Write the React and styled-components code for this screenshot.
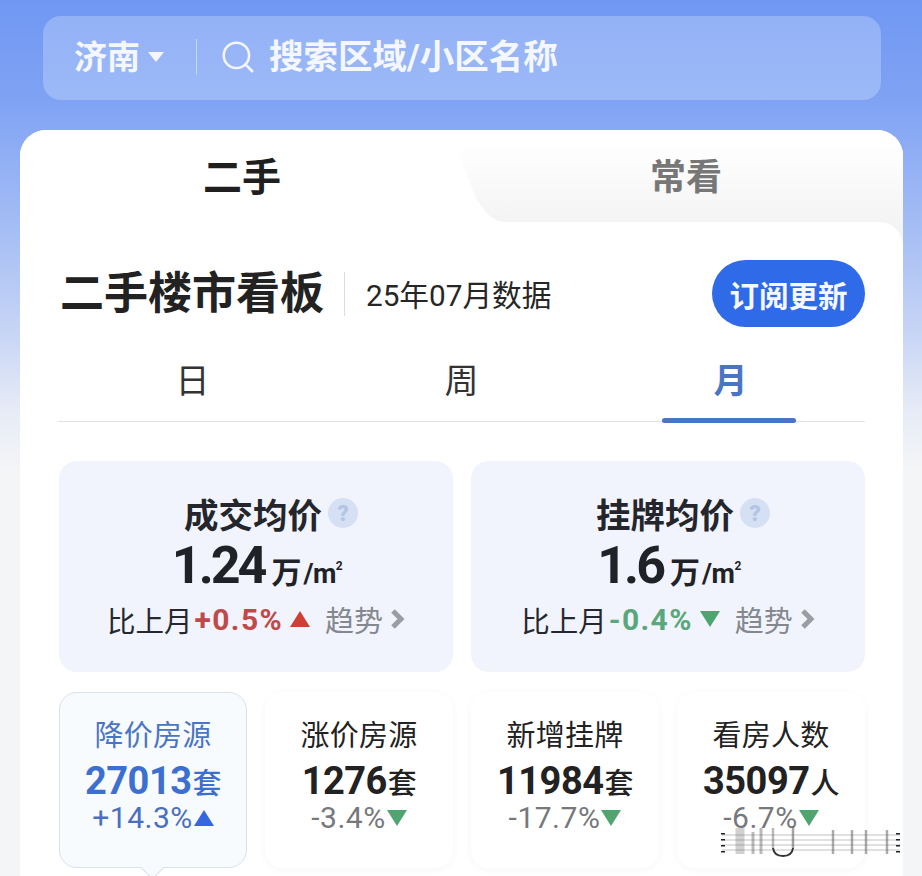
import styled, { createGlobalStyle } from 'styled-components'
import { Search } from 'lucide-react'

const GlobalStyle = createGlobalStyle`
  html, body {
    margin: 0;
    padding: 0;
    background: #f4f5f7;
  }
  * { box-sizing: border-box; }
`

const Page = styled.div`
  position: relative;
  width: 922px;
  height: 876px;
  overflow: hidden;
  padding: 16px 19px 0 20px;
  font-family: Roboto, "Noto Sans CJK SC", sans-serif;
  color: #222;
  background: linear-gradient(180deg, #7098f3 0, #7fa2f3 100px, #a3bcf5 220px, #c6d4f5 330px, #e6ebf6 410px, #f4f5f7 470px);
`

const SearchBar = styled.div`
  display: flex;
  align-items: center;
  height: 84px;
  margin: 0 22px 30px 23px;
  padding: 0 0 3px 31px;
  border-radius: 18px;
  background: linear-gradient(180deg, #93b1f6, #9cb9f7);
  color: #f4f7ff;
  font-size: 33px;
  font-weight: 700;
`

const City = styled.span`
  width: 74px;
  padding-bottom: 3px;
`

const Caret = styled.i`
  width: 0;
  height: 0;
  margin-right: 32px;
  border-left: 8px solid transparent;
  border-right: 8px solid transparent;
  border-top: 10px solid #f4f7ff;
`

const BarDivider = styled.i`
  width: 1px;
  height: 36px;
  margin-right: 24px;
  background: #c4d5fa;
`

const SearchIcon = styled(Search)`
  margin-right: 12px;
  margin-left: -2px;
  color: #f4f7ff;
`

const SearchText = styled.span`
  font-size: 34.5px;
  padding-bottom: 5px;
`

const Card = styled.div`
  width: 883px;
  height: 760px;
  border-radius: 26px 26px 0 0;
  background: linear-gradient(90deg, #fff 50%, #f4f4f4 50%);
  overflow: hidden;
`

const TabRow = styled.div`
  display: grid;
  grid-template-columns: 430px 453px;
  height: 92px;
  background: #fff;
`

const MainTab = styled.div`
  display: flex;
  align-items: center;
  justify-content: center;
  padding: 0 0 4px 14px;
  font-size: 39px;
  font-weight: 700;
  color: #1f1f1f;
`

const SideTab = styled.div`
  display: flex;
  align-items: center;
  justify-content: center;
  padding: 0 0 4px 19px;
  font-size: 36px;
  font-weight: 700;
  color: #777;
  background: linear-gradient(180deg, #fff 15%, #f9f9f9 60%, #f4f4f4 100%);
  clip-path: path('M0 0 C 14 22, 22 92, 56 92 L 453 92 L 453 0 Z');
`

const Body = styled.div`
  height: 668px;
  padding: 38px 38px 0;
  border-radius: 0 24px 0 0;
  background: #fff;
`

const Header = styled.div`
  display: flex;
  align-items: center;
  height: 67px;
  margin-left: 2px;
`

const Title = styled.h1`
  margin: 0;
  font-size: 44px;
  font-weight: 700;
  line-height: 1;
  color: #222;
`

const HeaderDivider = styled.i`
  width: 1px;
  height: 44px;
  margin: 0 21px 0 20px;
  background: #dcdcdc;
`

const Period = styled.span`
  flex: 1;
  font-size: 29.7px;
  color: #262626;
`

const Subscribe = styled.button`
  width: 153px;
  height: 67px;
  border: 0;
  border-radius: 34px;
  background: #2f6ae8;
  color: #f6f8ff;
  font-family: inherit;
  font-size: 29.5px;
  font-weight: 700;
`

const Range = styled.div`
  display: grid;
  grid-template-columns: repeat(3, 1fr);
  height: 95px;
  border-bottom: 1px solid #e2e2e2;
`

const RangeItem = styled.div`
  position: relative;
  display: flex;
  justify-content: center;
  align-items: center;
  padding-top: 8px;
  font-size: 34px;
  font-weight: ${p => (p.$active ? 700 : 400)};
  color: ${p => (p.$active ? '#4a75c4' : '#333')};
  ${p => p.$active && `
    &::after {
      content: '';
      position: absolute;
      left: 66px;
      bottom: -2px;
      width: 134px;
      height: 5px;
      border-radius: 3px;
      background: #4a75c4;
    }
  `}
`

const PriceGrid = styled.div`
  display: grid;
  grid-template-columns: 394px 394px;
  gap: 18px;
  margin: 39px 0 20px 1px;
`

const PriceCard = styled.div`
  display: flex;
  flex-direction: column;
  align-items: center;
  height: 211px;
  padding-top: 31px;
  border-radius: 18px;
  background: #f1f4fd;
`

const PriceTitle = styled.div`
  display: flex;
  align-items: center;
  height: 42px;
  padding-left: 30px;
  font-size: 34.5px;
  font-weight: 700;
  color: #24262b;
`

const Help = styled.span`
  display: flex;
  align-items: center;
  justify-content: center;
  width: 30px;
  height: 30px;
  margin-left: 6px;
  border-radius: 50%;
  background: #d5e0f4;
  color: #b3c4e4;
  font-size: 22px;
  font-weight: 900;
`

const PriceValue = styled.div`
  display: flex;
  align-items: baseline;
  height: 62px;
  margin-top: 1px;
  padding-left: 2px;
  font-size: 52px;
  line-height: 62px;
  font-weight: 700;
  letter-spacing: -3px;
  color: #1f2227;
`

const Unit = styled.span`
  margin-left: 7px;
  font-size: 30px;
  font-weight: 700;
  letter-spacing: 0;
  white-space: nowrap;
`

const UnitSmall = styled.span`
  font-size: 27px;
  font-weight: 700;
  margin-left: 2px;
  letter-spacing: -0.5px;
`

const Square = styled.sup`
  font-size: 12px;
  line-height: 0;
  vertical-align: 13px;
`

const Compare = styled.div`
  display: flex;
  align-items: center;
  height: 40px;
  margin-top: 2px;
  font-size: 28.5px;
  color: #25282e;
`

const Change = styled.span`
  margin-left: 2px;
  font-size: 30px;
  font-weight: 700;
  letter-spacing: 1.4px;
  color: ${p => p.$color};
`

const Arrow = styled.i`
  width: 0;
  height: 0;
  margin-left: ${p => p.$gap}px;
  border-left: ${p => p.$size}px solid transparent;
  border-right: ${p => p.$size}px solid transparent;
  ${p => (p.$down ? 'border-top' : 'border-bottom')}: ${p => p.$size * 1.6}px solid ${p => p.$color};
`

const Trend = styled.span`
  margin-left: 15px;
  font-size: 29px;
  color: #85888e;
`

const Chevron = styled.svg`
  width: 15px;
  height: 22px;
  margin-left: 7px;
`

const StatGrid = styled.div`
  display: grid;
  grid-template-columns: repeat(4, 188px);
  gap: 18px;
  margin-left: 1px;
`

const StatCard = styled.div`
  position: relative;
  display: flex;
  flex-direction: column;
  align-items: center;
  height: 176px;
  padding-top: 24px;
  border-radius: 18px;
  border: 1.5px solid ${p => (p.$active ? '#d8e1ee' : 'transparent')};
  background: ${p => (p.$active ? '#f8fbfe' : '#fff')};
  box-shadow: ${p => (p.$active ? 'none' : '0 2px 8px rgba(40, 50, 80, 0.04)')};
  color: ${p => (p.$active ? '#4a75c4' : '#222')};
  ${p => p.$active && `
    &::after {
      content: '';
      position: absolute;
      left: 84px;
      bottom: -9px;
      width: 16px;
      height: 16px;
      background: #f8fbfe;
      border-right: 1.5px solid #d8e1ee;
      border-bottom: 1.5px solid #d8e1ee;
      transform: rotate(45deg);
    }
  `}
`

const StatTitle = styled.div`
  height: 38px;
  font-size: 29px;
  line-height: 38px;
  letter-spacing: 0.2px;
`

const StatValue = styled.div`
  display: flex;
  align-items: baseline;
  height: 42px;
  margin-top: 4px;
  font-size: 38px;
  line-height: 44px;
  font-weight: 700;
  letter-spacing: -0.5px;
  color: ${p => (p.$active ? '#3d6fd0' : '#222')};
`

const StatUnit = styled.span`
  font-size: 29px;
  font-weight: 500;
  margin-left: 1px;
`

const StatChange = styled.div`
  display: flex;
  align-items: center;
  height: 34px;
  font-size: 30px;
  line-height: 34px;
  letter-spacing: 0.5px;
  color: ${p => (p.$active ? '#4a6fc0' : '#76787c')};
`

const Watermark = styled.svg`
  position: absolute;
  left: 718px;
  top: 826px;
  width: 186px;
  height: 32px;
  filter: blur(0.7px);
`

const priceCards = [
  { title: '成交均价', value: '1.24', change: '+0.5%', color: '#c04a4a', down: false, arrow: '#cf3f36' },
  { title: '挂牌均价', value: '1.6', change: '-0.4%', color: '#5aa77c', down: true, arrow: '#4aa56f' },
]

const stats = [
  { title: '降价房源', value: '27013', unit: '套', change: '+14.3%', active: true },
  { title: '涨价房源', value: '1276', unit: '套', change: '-3.4%' },
  { title: '新增挂牌', value: '11984', unit: '套', change: '-17.7%' },
  { title: '看房人数', value: '35097', unit: '人', change: '-6.7%' },
]

const App = () => (
  <Page>
    <GlobalStyle />
    <SearchBar>
      <City>济南</City>
      <Caret />
      <BarDivider />
      <SearchIcon size={38} strokeWidth={1.6} />
      <SearchText>搜索区域/小区名称</SearchText>
    </SearchBar>

    <Card>
      <TabRow>
        <MainTab>二手</MainTab>
        <SideTab>常看</SideTab>
      </TabRow>
      <Body>
        <Header>
          <Title>二手楼市看板</Title>
          <HeaderDivider />
          <Period>25年07月数据</Period>
          <Subscribe>订阅更新</Subscribe>
        </Header>
        <Range>
          <RangeItem>日</RangeItem>
          <RangeItem>周</RangeItem>
          <RangeItem $active>月</RangeItem>
        </Range>
        <PriceGrid>
          {priceCards.map(card => (
            <PriceCard key={card.title}>
              <PriceTitle>{card.title}<Help>?</Help></PriceTitle>
              <PriceValue>
                {card.value}
                <Unit>万<UnitSmall>/m<Square>2</Square></UnitSmall></Unit>
              </PriceValue>
              <Compare>
                比上月
                <Change $color={card.color}>{card.change}</Change>
                <Arrow $gap={7} $size={10} $down={card.down} $color={card.arrow} />
                <Trend>趋势</Trend>
                <Chevron viewBox="0 0 15 22">
                  <path d="M3 3 L11 11 L3 19" fill="none" stroke="#9a9da3" strokeWidth="5" />
                </Chevron>
              </Compare>
            </PriceCard>
          ))}
        </PriceGrid>
        <StatGrid>
          {stats.map(stat => (
            <StatCard key={stat.title} $active={stat.active}>
              <StatTitle>{stat.title}</StatTitle>
              <StatValue $active={stat.active}>
                {stat.value}
                <StatUnit>{stat.unit}</StatUnit>
              </StatValue>
              <StatChange $active={stat.active}>
                {stat.change}
                <Arrow
                  $gap={1}
                  $size={10}
                  $down={!stat.active}
                  $color={stat.active ? '#3568df' : '#4fa56f'}
                />
              </StatChange>
            </StatCard>
          ))}
        </StatGrid>
      </Body>
    </Card>

    <Watermark viewBox="0 0 186 32">
      <g stroke="#666" strokeWidth="2" opacity="0.2">
        <path d="M4 9 H182 M4 14 H182 M4 19 H182 M4 24 H182" />
      </g>
      <g stroke="#222" strokeWidth="4" strokeDasharray="1.5 4.5">
        <path d="M5 7 V30 M180 7 V30" />
      </g>
      <g stroke="#666" fill="none">
        <path d="M22 2 V28" strokeWidth="9" opacity="0.3" />
        <path d="M35 6 V28" strokeWidth="3" opacity="0.45" />
        <path d="M43 2 V28" strokeWidth="3" opacity="0.45" />
        <path d="M55 2 V22" strokeWidth="2.5" opacity="0.45" />
        <path d="M55 22 Q56 30 65 30 Q74 30 75 22" stroke="#333" strokeWidth="2" />
        <path d="M75 22 V0" strokeWidth="2.5" opacity="0.6" />
        <path d="M115 4 V28 M134 4 V28 M148 4 V28 M169 4 V28" strokeWidth="2.5" opacity="0.55" />
      </g>
    </Watermark>
  </Page>
)

export default App
